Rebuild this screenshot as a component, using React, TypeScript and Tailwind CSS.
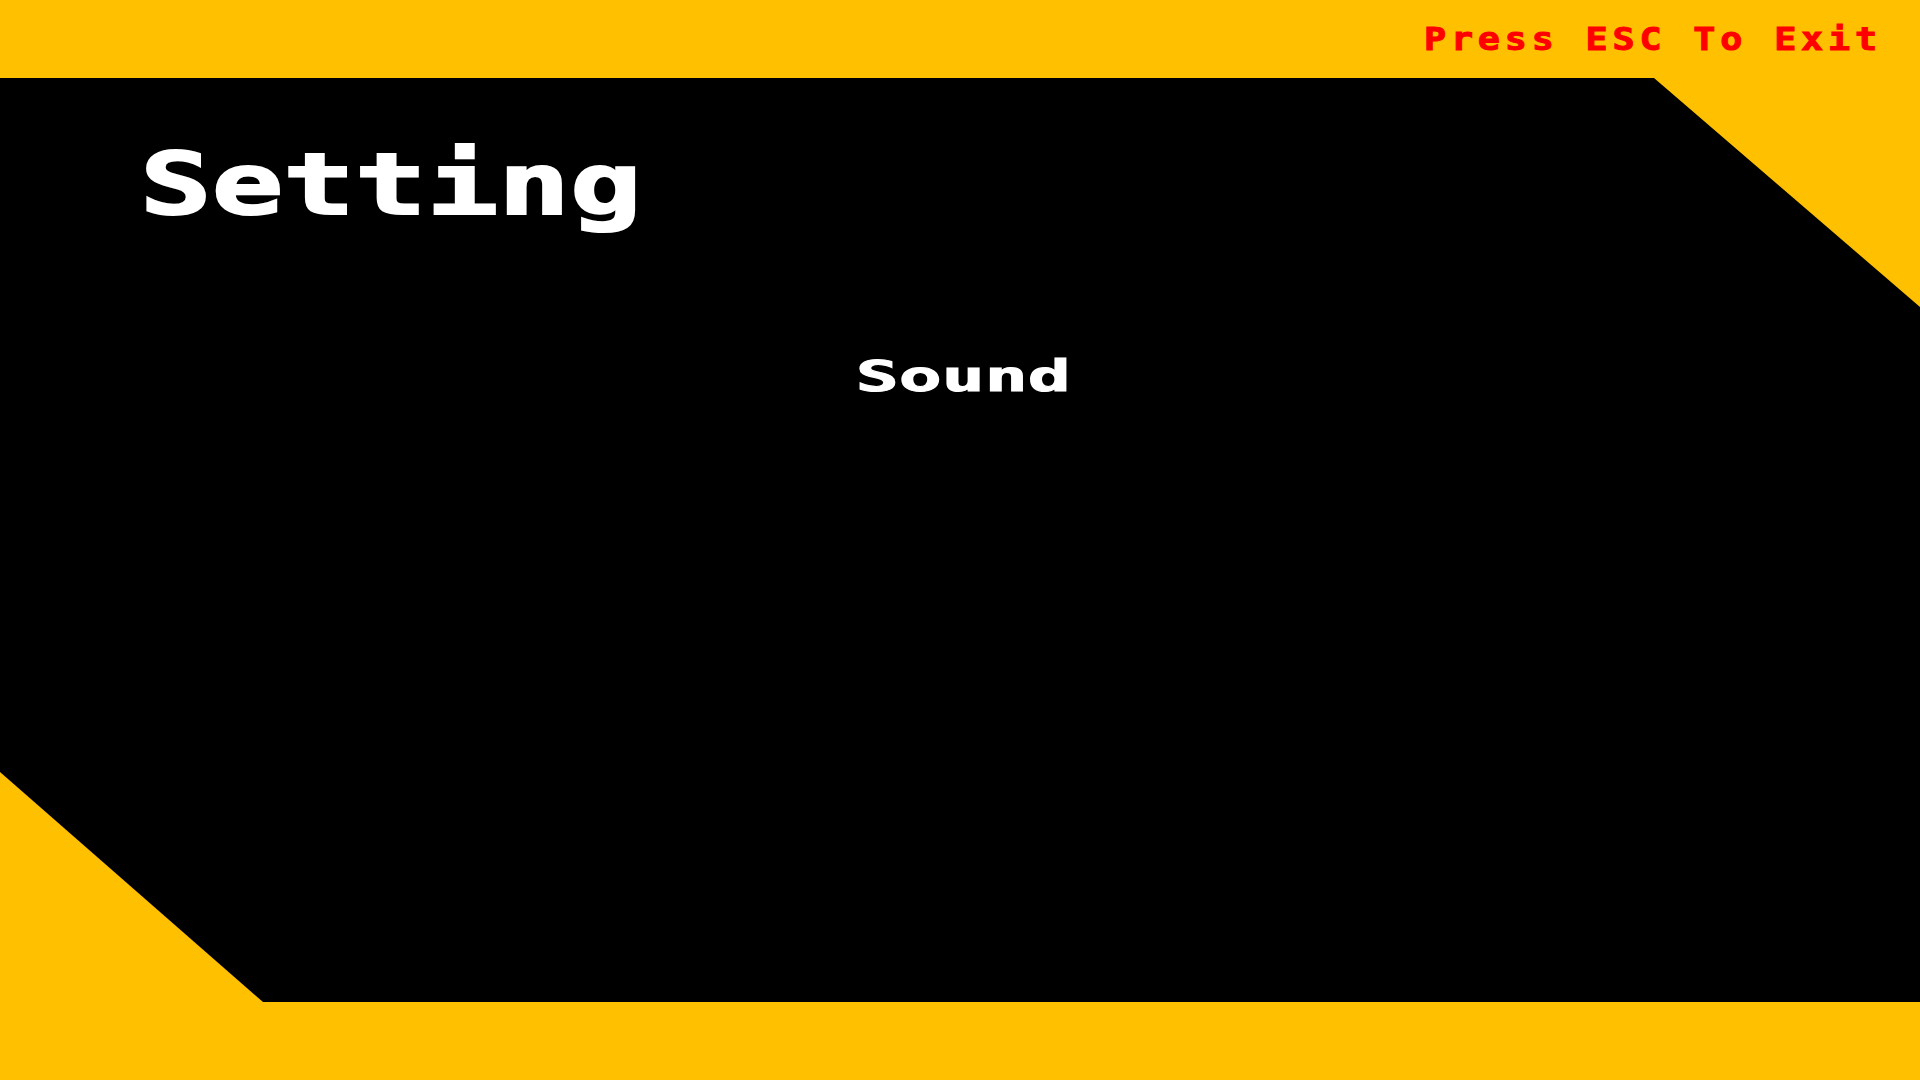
import React from 'react'

const PIXEL_FONT = "font-['DejaVu_Sans_Mono','Liberation_Mono',monospace] font-bold"

const SettingsScreen: React.FC = () => {
  return (
    <div className="w-[1920px] h-[1080px] flex flex-col bg-[#ffc000] overflow-hidden">
      {/* top bar */}
      <div className="h-[78px] flex items-center justify-end pr-[38px] shrink-0">
        <span
          className={`${PIXEL_FONT} inline-block origin-right scale-x-[1.148] text-[32px] leading-none tracking-[4.2px] text-[#ff0000] [-webkit-text-stroke:1px_#ff0000]`}
        >
          Press ESC To Exit
        </span>
      </div>

      {/* black panel with cut corners */}
      <div className="flex-1 bg-black flex flex-col [clip-path:polygon(0_0,1654px_0,100%_229px,100%_100%,263px_100%,0_694px)]">
        <h1
          className={`${PIXEL_FONT} self-start inline-block origin-left scale-x-[1.384] text-[86px] leading-none text-white mt-[63px] ml-[140px] [-webkit-text-stroke:2px_white]`}
        >
          Setting
        </h1>

        <div className="flex justify-center mt-[129px]">
          <button
            className={`${PIXEL_FONT} inline-block ml-[7px] scale-x-[1.7] text-[42px] leading-none text-white [-webkit-text-stroke:1px_white]`}
          >
            Sound
          </button>
        </div>
      </div>

      {/* bottom bar */}
      <div className="h-[78px] shrink-0" />
    </div>
  )
}

export default function App() {
  return <SettingsScreen />
}
